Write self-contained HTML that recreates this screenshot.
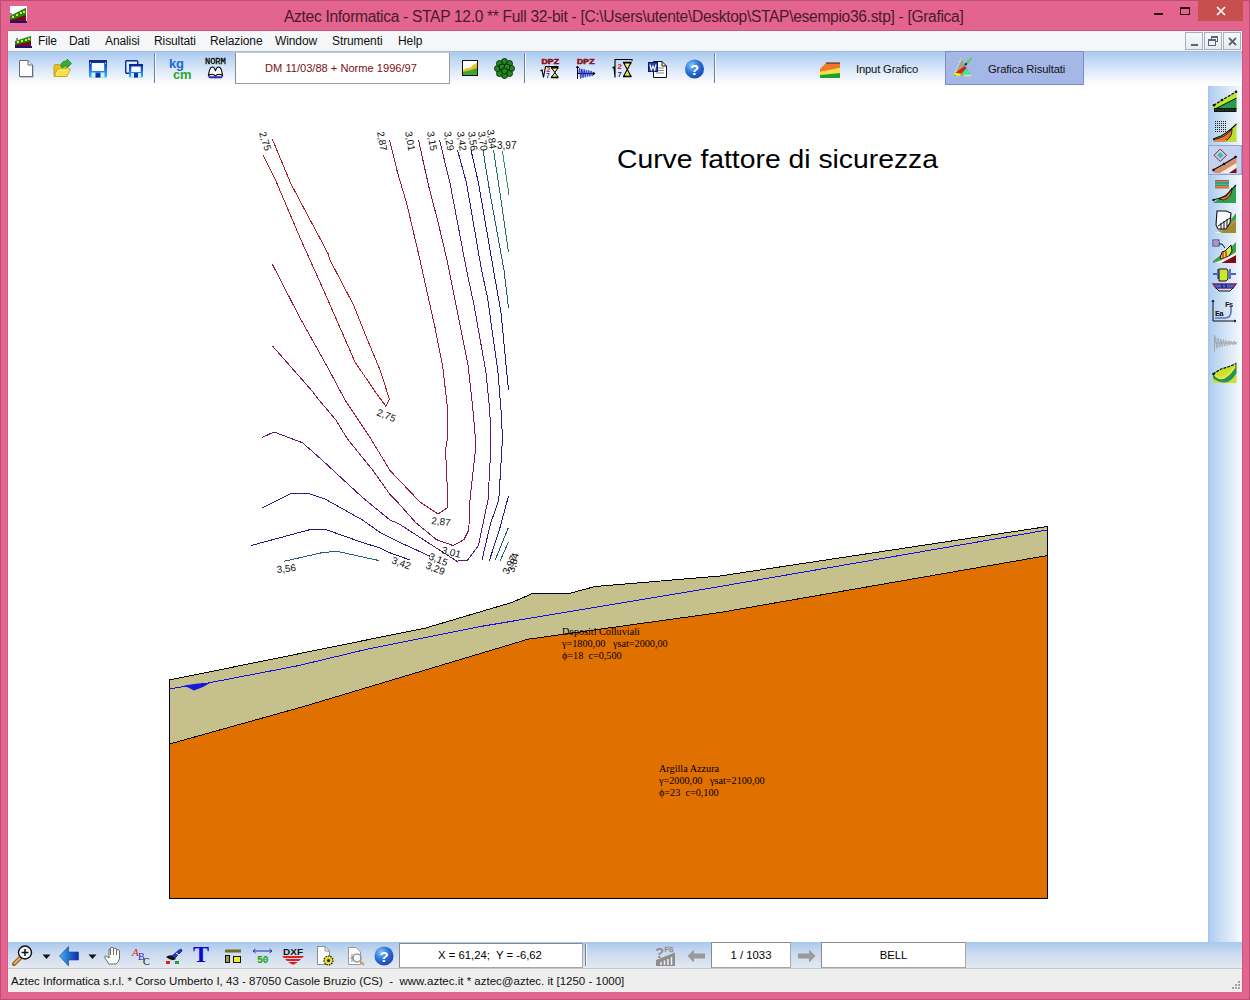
<!DOCTYPE html>
<html><head><meta charset="utf-8">
<style>
*{margin:0;padding:0;box-sizing:border-box}
html,body{width:1250px;height:1000px;overflow:hidden;background:#E3648E;font-family:"Liberation Sans",sans-serif;position:relative}
.a{position:absolute}
svg.a{overflow:visible}
#ttext{left:284px;top:8px;font-size:15.6px;color:#4A1A2C;white-space:pre;letter-spacing:-0.32px}
#menu{left:8px;top:31px;width:1234px;height:19px;background:#F5F6F7}
.mi{position:absolute;top:3px;font-size:12px;color:#111;white-space:pre;letter-spacing:-0.1px}
#tb{left:8px;top:50px;width:1234px;height:36px;background:linear-gradient(#EEF3F9 0px,#EEF3F9 1px,#A9BDD6 1px,#A9BDD6 2px,#AACAF0 2px,#C9DDF5 13px,#F4F8FD 30px,#FFFFFF 36px)}
#canvas{left:8px;top:86px;width:1200px;height:856px;background:#fff}
#side{left:1208px;top:86px;width:34px;height:856px;background:linear-gradient(90deg,#A8C0DC 0px,#AFCDF3 2px,#C2DAF3 10px,#E6EEFA 26px,#F6F9FE 33px)}
#btb{left:8px;top:942px;width:1234px;height:27px;background:linear-gradient(#A8C8EE 0px,#C8D9EF 10px,#E4E9F0 26px);border-bottom:1px solid #C5C8CC}
#status{left:8px;top:969px;width:1234px;height:23px;background:#EEEEEE}
#stext{left:11px;top:975px;font-size:11.53px;color:#111;white-space:pre}
.box{position:absolute;background:#fff;border:1px solid #A6A6A6;border-top-color:#8A8A8A;border-left-color:#8A8A8A;white-space:pre;text-align:center;color:#000}
.sep{position:absolute;width:2px;border-left:1px solid #6F7F95;border-right:1px solid #F8FBFF}
</style></head><body>

<div class="a" style="left:0;top:0;width:1250px;height:1000px;border:1px solid #B84E72"></div>
<div class="a" style="left:1242px;top:31px;width:1px;height:961px;background:#C85A80"></div>
<div class="a" style="left:7px;top:31px;width:1px;height:961px;background:#D05C84"></div>
<div id="ttext" class="a">Aztec Informatica - STAP 12.0 ** Full 32-bit - [C:\Users\utente\Desktop\STAP\esempio36.stp] - [Grafica]</div>
<svg class="a" style="left:10px;top:6px" width="17" height="17" viewBox="0 0 17 17">
<rect x="0" y="0" width="17" height="17" fill="#fff"/>
<path d="M0,10 L4,8 L8,6 L12,4 L16,2 V17 H0 Z" fill="#7A0A1A"/>
<path d="M0,10 L16,2 V9 L0,14 Z" fill="#18900E"/>
<path d="M2,10 h2 v2 h-2z M6,8 h2 v2 h-2z M10,6 h2 v2 h-2z M13,5 h2 v2 h-2z" fill="#E8E040"/>
<rect x="0" y="15" width="17" height="2" fill="#20107A"/>
<rect x="0" y="7" width="2" height="3" fill="#B070B0"/>
</svg>
<div class="a" style="left:1154px;top:13px;width:9px;height:2px;background:#2A0A14"></div>
<div class="a" style="left:1180px;top:7px;width:10px;height:8px;border:1px solid #2A0A14;border-top-width:2px"></div>
<div class="a" style="left:1198px;top:0;width:45px;height:21px;background:#C7504F"></div>
<svg class="a" style="left:1216px;top:6px" width="10" height="10" viewBox="0 0 10 10"><path d="M1,1 L9,9 M9,1 L1,9" stroke="#fff" stroke-width="1.6"/></svg>
<div class="a" style="left:8px;top:30px;width:1234px;height:1px;background:#C9587E"></div>
<div id="menu" class="a">
<svg class="a" style="left:7px;top:5px" width="17" height="12" viewBox="0 0 17 12">
<path d="M0,6 L16,1 V12 H0 Z" fill="#7A0A1A"/>
<path d="M0,5 L16,0 V5 L0,9 Z" fill="#18900E"/>
<path d="M2,5 h2 v2 h-2z M6,4 h2 v2 h-2z M10,3 h2 v2 h-2z M13,2 h2 v2 h-2z" fill="#E8E040"/>
<rect x="0" y="10" width="17" height="2" fill="#20107A"/>
<rect x="1" y="2" width="2" height="3" fill="#B070B0"/>
</svg>
<span class="mi" style="left:30px">File</span>
<span class="mi" style="left:61px">Dati</span>
<span class="mi" style="left:97px">Analisi</span>
<span class="mi" style="left:146px">Risultati</span>
<span class="mi" style="left:202px">Relazione</span>
<span class="mi" style="left:267px">Window</span>
<span class="mi" style="left:324px">Strumenti</span>
<span class="mi" style="left:390px">Help</span>
<div class="a" style="left:1177px;top:1px;width:18px;height:18px;border:1px solid #A8B0BA;background:linear-gradient(#F6F8FB,#E6ECF3)"><div class="a" style="left:5px;top:11px;width:7px;height:2px;background:#5C6470"></div></div>
<div class="a" style="left:1196px;top:1px;width:18px;height:18px;border:1px solid #A8B0BA;background:linear-gradient(#F6F8FB,#E6ECF3)"><div class="a" style="left:6px;top:3px;width:7px;height:6px;border:1px solid #5C6470;border-top-width:2px"></div><div class="a" style="left:3px;top:6px;width:8px;height:7px;border:1px solid #5C6470;border-top-width:2px;background:#EEF2F7"></div></div>
<div class="a" style="left:1215px;top:1px;width:18px;height:18px;border:1px solid #A8B0BA;background:linear-gradient(#F6F8FB,#E6ECF3)"><svg class="a" style="left:4px;top:4px" width="9" height="9" viewBox="0 0 9 9"><path d="M1,1 L8,8 M8,1 L1,8" stroke="#5C6470" stroke-width="1.8"/></svg></div>
</div>
<div id="tb" class="a"></div>
<div id="canvas" class="a"></div>
<div id="side" class="a"></div>
<div id="btb" class="a"></div>
<div id="status" class="a"></div>
<div id="stext" class="a">Aztec Informatica s.r.l. * Corso Umberto I, 43 - 87050 Casole Bruzio (CS)  -  www.aztec.it * aztec@aztec. it [1250 - 1000]</div>
<svg class="a" style="left:1231px;top:980px" width="10" height="10" viewBox="0 0 10 10" fill="#A0A0A0"><rect x="7" y="1" width="2" height="2"/><rect x="4" y="4" width="2" height="2"/><rect x="7" y="4" width="2" height="2"/><rect x="1" y="7" width="2" height="2"/><rect x="4" y="7" width="2" height="2"/><rect x="7" y="7" width="2" height="2"/></svg>

<!-- new doc -->
<svg class="a" style="left:18px;top:59px" width="18" height="20" viewBox="0 0 18 20">
<path d="M2.5,2.5 H11 L15.5,7 V18.5 H2.5 Z" fill="#9A9EA4"/>
<path d="M1.5,1.5 H10 L14.5,6 V17.5 H1.5 Z" fill="#FDFDFD" stroke="#6A6E74" stroke-width="1"/>
<path d="M10,1.5 V6 H14.5" fill="#E6E8EC" stroke="#6A6E74" stroke-width="1"/>
</svg>
<!-- open folder -->
<svg class="a" style="left:53px;top:59px" width="19" height="19" viewBox="0 0 19 19">
<path d="M1,7 Q1,5.5 2.5,5.5 L6,5.5 L7.5,7 L13,7 V17.5 H1 Z" fill="#E8C020" stroke="#B89010" stroke-width="0.8"/>
<path d="M1.5,17.5 L4.5,10 L17.5,10 L14,17.5 Z" fill="#F8E048" stroke="#C8A010" stroke-width="0.8"/>
<path d="M3,16 L5.5,11 L15,11" fill="none" stroke="#FFF4A0" stroke-width="1"/>
<path d="M7.5,6.5 Q9,1.5 14,2 L14,0 L18.5,4.5 L14,9 L14,6.5 Q11,6 9.5,9 Z" fill="#30B030" stroke="#108010" stroke-width="0.7"/>
</svg>
<!-- save -->
<svg class="a" style="left:89px;top:60px" width="18" height="18" viewBox="0 0 18 18">
<defs><linearGradient id="fl" x1="0" y1="0" x2="0" y2="1"><stop offset="0" stop-color="#0A2A98"/><stop offset="0.5" stop-color="#1A6AE0"/><stop offset="1" stop-color="#40B8F8"/></linearGradient>
<linearGradient id="fl2" x1="0" y1="0" x2="0" y2="1"><stop offset="0" stop-color="#0A40B8"/><stop offset="1" stop-color="#0A2A80"/></linearGradient></defs>
<rect x="0" y="0" width="18" height="17.5" rx="1" fill="url(#fl)"/>
<rect x="0" y="0" width="18" height="2.5" fill="#0A2A90"/>
<rect x="2.8" y="3" width="12.4" height="8" fill="#F4FAFF"/>
<rect x="2.5" y="12.5" width="13" height="5" fill="#C8F0FF"/>
<rect x="6.5" y="12.5" width="5" height="5" fill="url(#fl2)"/>
<rect x="1" y="2.5" width="1" height="1" fill="#fff"/><rect x="16" y="2.5" width="1" height="1" fill="#fff"/>
</svg>
<!-- save as -->
<svg class="a" style="left:125px;top:60px" width="19" height="18" viewBox="0 0 19 18">
<rect x="0.7" y="0.7" width="12" height="12.5" rx="1" fill="#DDF0FF" stroke="#0A2A98" stroke-width="1.4"/>
<rect x="4" y="4" width="14" height="13.5" rx="1" fill="url(#fl)"/>
<rect x="4" y="4" width="14" height="2" fill="#0A2A90"/>
<rect x="6.3" y="6.5" width="9.4" height="5.5" fill="#F4FAFF"/>
<rect x="6" y="13" width="10" height="4.5" fill="#C8F0FF"/>
<rect x="9" y="13" width="4" height="4.5" fill="url(#fl2)"/>
</svg>
<div class="sep" style="left:154px;top:53px;height:30px"></div>
<!-- kg cm -->
<div class="a" style="left:169px;top:57px;font-size:13px;font-weight:bold;color:#2068D0;letter-spacing:-0.2px;line-height:14px">kg</div>
<div class="a" style="left:173px;top:68px;font-size:13px;font-weight:bold;color:#28A828;letter-spacing:-0.3px;line-height:13px">cm</div>
<!-- NORM -->
<div class="a" style="left:205px;top:58px;font-family:'Liberation Mono',monospace;font-size:8.8px;color:#000;letter-spacing:-0.1px;line-height:9px;-webkit-text-stroke:0.3px #000">NORM</div>
<svg class="a" style="left:207px;top:66px" width="17" height="12" viewBox="0 0 17 12">
<path d="M8.5,10 C7,8 4,8 1.5,9.5 C2,5 3,1.5 5,1 C7,0.8 8,3 8.5,5 C9,3 10,0.8 12,1 C14,1.5 15,5 15.5,9.5 C13,8 10,8 8.5,10 Z" fill="#fff" stroke="#000" stroke-width="1.1"/>
<path d="M1.5,10.8 H15.5 L14.5,11.8 H2.5 Z" fill="#1818A8" stroke="#1818A8" stroke-width="0.8"/>
</svg>
<!-- DM box -->
<div class="box" style="left:235px;top:52px;width:215px;height:32px;font-size:11.1px;line-height:30px;color:#781018;border-color:#C8C8C8 #9A9A9A #9A9A9A #8A8A8A;padding-right:3px">DM 11/03/88 + Norme 1996/97</div>
<!-- image icon -->
<svg class="a" style="left:462px;top:60px" width="16" height="16" viewBox="0 0 16 16">
<rect x="0.5" y="0.5" width="15" height="15" fill="#fff" stroke="#111" stroke-width="1"/>
<path d="M1,10 L5,8 L8,8 L11,5 L15,3 V15 H1 Z" fill="#F0C020"/>
<path d="M1,12 L5,11 L9,10 L15,8 V15 H1 Z" fill="#38A838"/>
<rect x="0.5" y="0.5" width="15" height="15" fill="none" stroke="#111" stroke-width="1"/>
</svg>
<!-- green cluster -->
<svg class="a" style="left:494px;top:58px" width="21" height="21" viewBox="0 0 21 21">
<g fill="#1E8A1E" stroke="#0A200A" stroke-width="0.9">
<circle cx="10.5" cy="3.5" r="3"/><circle cx="15.5" cy="5.5" r="3"/><circle cx="17.5" cy="10.5" r="3"/><circle cx="15.5" cy="15.5" r="3"/><circle cx="10.5" cy="17.5" r="3"/><circle cx="5.5" cy="15.5" r="3"/><circle cx="3.5" cy="10.5" r="3"/><circle cx="5.5" cy="5.5" r="3"/><circle cx="8" cy="9" r="3"/><circle cx="13" cy="9" r="3"/><circle cx="10.5" cy="13" r="3"/>
</g>
</svg>
<div class="sep" style="left:524px;top:53px;height:30px"></div>
<!-- DPZ 1 -->
<svg class="a" style="left:540px;top:58px" width="21" height="21" viewBox="0 0 21 21">
<text x="1.5" y="5.8" font-family="Liberation Sans" font-weight="bold" font-size="6.5" fill="#8A1020" stroke="#8A1020" stroke-width="0.5" textLength="17.5" lengthAdjust="spacingAndGlyphs">DPZ</text>
<path d="M0.5,13 L2,12 L3.5,19.5 L5.5,8.5 H18.5" fill="none" stroke="#000" stroke-width="1.1"/>
<text x="6.5" y="14" font-family="Liberation Sans" font-weight="bold" font-size="7" fill="#D01818">2</text>
<text x="6" y="20" font-family="Liberation Sans" font-weight="bold" font-size="6.5" fill="#1818C0">7</text>
<path d="M11,9.5 H18.5 M11,19.5 H18.5" stroke="#000" stroke-width="1.4"/>
<path d="M11.5,10 L15,14.5 L11.5,19 H18 L14.8,14.5 L18,10 Z" fill="#F0F080" stroke="#000" stroke-width="1"/>
<path d="M13,18.5 L14.8,16 L16.5,18.5 Z" fill="#E0E020"/>
</svg>
<!-- DPZ 2 -->
<svg class="a" style="left:576px;top:58px" width="21" height="21" viewBox="0 0 21 21">
<text x="1" y="5.8" font-family="Liberation Sans" font-weight="bold" font-size="6.5" fill="#8A1020" stroke="#8A1020" stroke-width="0.5" textLength="17.5" lengthAdjust="spacingAndGlyphs">DPZ</text>
<path d="M1.5,8 V21 M0.3,10 L1.5,8 L2.7,10 M1.5,15.5 H18.5" fill="none" stroke="#000" stroke-width="1"/>
<path d="M17,13.5 L19.5,15.5 L17,17.5 Z" fill="#000"/>
<polyline points="3.00,15.50 3.10,14.03 3.20,12.68 3.30,11.56 3.40,10.74 3.50,10.28 3.60,10.21 3.70,10.54 3.80,11.23 3.90,12.22 4.00,13.44 4.10,14.80 4.20,16.19 4.30,17.52 4.40,18.68 4.50,19.59 4.60,20.19 4.70,20.43 4.80,20.31 4.90,19.84 5.00,19.05 5.10,18.01 5.20,16.79 5.30,15.50 5.40,14.22 5.50,13.06 5.60,12.08 5.70,11.37 5.80,10.98 5.90,10.92 6.00,11.20 6.10,11.80 6.20,12.66 6.30,13.72 6.40,14.89 6.50,16.10 6.60,17.25 6.70,18.25 6.80,19.04 6.90,19.56 7.00,19.77 7.10,19.67 7.20,19.26 7.30,18.57 7.40,17.67 7.50,16.62 7.60,15.50 7.70,14.39 7.80,13.38 7.90,12.54 8.00,11.93 8.10,11.58 8.20,11.54 8.30,11.78 8.40,12.29 8.50,13.04 8.60,13.96 8.70,14.98 8.80,16.02 8.90,17.02 9.00,17.89 9.10,18.57 9.20,19.02 9.30,19.20 9.40,19.11 9.50,18.75 9.60,18.16 9.70,17.38 9.80,16.47 9.90,15.50 10.00,14.54 10.10,13.67 10.20,12.94 10.30,12.41 10.40,12.11 10.50,12.07 10.60,12.28 10.70,12.72 10.80,13.37 10.90,14.16 11.00,15.05 11.10,15.95 11.20,16.81 11.30,17.57 11.40,18.16 11.50,18.55 11.60,18.71 11.70,18.63 11.80,18.32 11.90,17.80 12.00,17.13 12.10,16.34 12.20,15.50 12.30,14.67 12.40,13.91 12.50,13.28 12.60,12.82 12.70,12.56 12.80,12.53 12.90,12.71 13.00,13.09 13.10,13.65 13.20,14.34 13.30,15.11 13.40,15.89 13.50,16.64 13.60,17.29 13.70,17.80 13.80,18.14 13.90,18.28 14.00,18.21 14.10,17.94 14.20,17.50 14.30,16.91 14.40,16.23 14.50,15.50 14.60,14.78 14.70,14.12 14.80,13.58 14.90,13.18 15.00,12.96 15.10,12.92 15.20,13.08 15.30,13.42 15.40,13.90 15.50,14.50 15.60,15.16 15.70,15.84 15.80,16.48 15.90,17.05 16.00,17.49 16.10,17.79 16.20,17.90 16.30,17.85 16.40,17.61 16.50,17.23 16.60,16.72 16.70,16.13 16.80,15.50 16.90,14.88 17.00,14.31" fill="none" stroke="#1A2AC8" stroke-width="1"/>
</svg>
<!-- sqrt hourglass -->
<svg class="a" style="left:612px;top:58px" width="21" height="21" viewBox="0 0 21 21">
<path d="M0.5,10 L2,9 L3,19.5 L3,1.5 H20 V3" fill="none" stroke="#000" stroke-width="1.1"/>
<text x="5.5" y="11" font-family="Liberation Sans" font-weight="bold" font-size="8" fill="#D01818">2</text>
<text x="5.5" y="19" font-family="Liberation Sans" font-weight="bold" font-size="7.5" fill="#1818C0">7</text>
<path d="M11,4.5 H19.5 M11,18.5 H19.5" stroke="#000" stroke-width="1.5"/>
<path d="M11.8,5 L15.2,11.5 L11.8,18 H18.8 L15.3,11.5 L18.8,5 Z" fill="#F0F080" stroke="#000" stroke-width="1.1"/>
<path d="M13,17.5 L15.2,14 L17.5,17.5 Z" fill="#E0E020"/>
</svg>
<!-- word -->
<svg class="a" style="left:648px;top:59px" width="20" height="19" viewBox="0 0 20 19">
<path d="M5.5,2.5 H14 L18.5,7 V18.5 H5.5 Z" fill="#fff" stroke="#111" stroke-width="1"/>
<path d="M14,2.5 V7 H18.5" fill="none" stroke="#111" stroke-width="1"/>
<path d="M8,9 H16 M8,11.5 H16 M8,14 H16" stroke="#777" stroke-width="0.9"/>
<rect x="0.5" y="3.5" width="9" height="9" fill="#2040B0" stroke="#0A1A70" stroke-width="1"/>
<path d="M2,5.5 L3.3,11 L5,7 L6.7,11 L8,5.5" fill="none" stroke="#fff" stroke-width="1.1"/>
</svg>
<!-- help -->
<svg class="a" style="left:684px;top:59px" width="21" height="20" viewBox="0 0 21 20">
<defs><radialGradient id="hg" cx="0.35" cy="0.3" r="0.8"><stop offset="0" stop-color="#7FC8F8"/><stop offset="0.5" stop-color="#2A70D8"/><stop offset="1" stop-color="#1A40B0"/></radialGradient></defs>
<circle cx="10.5" cy="10" r="9.5" fill="url(#hg)"/>
<text x="10.5" y="16" font-family="Liberation Sans" font-weight="bold" font-size="15" fill="#fff" text-anchor="middle">?</text>
</svg>
<div class="sep" style="left:714px;top:53px;height:30px"></div>
<!-- Input Grafico -->
<svg class="a" style="left:820px;top:61px" width="21" height="18" viewBox="0 0 21 18">
<path d="M0,8 L6,2 H20 V7 L0,11 Z" fill="#F07828"/>
<path d="M6,2 H20" stroke="#222" stroke-width="1"/>
<path d="M0,11 L20,7 V12 L0,14 Z" fill="#F4E040"/>
<path d="M0,14 L20,12 V17 H0 Z" fill="#20A020"/>
<rect x="0" y="9" width="20" height="1" fill="#F8F060" opacity="0"/>
</svg>
<div class="a" style="left:856px;top:63px;font-size:11.2px;color:#111;white-space:pre;letter-spacing:-0.15px">Input Grafico</div>
<div class="a" style="left:945px;top:51px;width:139px;height:34px;background:#A5B7E7;border:1px solid #7A8FC6"></div>
<svg class="a" style="left:952px;top:57px" width="21" height="21" viewBox="0 0 21 21">
<path d="M9.3,1.4 L2,18.7 L19,18.4 Z" fill="#98A888"/>
<path d="M9.3,1.4 L2,18.7" stroke="#F8F4B0" stroke-width="1.4" stroke-dasharray="1,1"/>
<path d="M13,10 L16,14 L18,18 L11,18 Z" fill="#20F0B0"/>
<path d="M4,15.5 L12.5,9 L14.5,11 L8,18 Z" fill="#E81A00"/>
<path d="M2.5,16 L9,16.5 L8,19 L2,19 Z" fill="#F0F020"/>
<path d="M2,17.5 L5,19 L2,19 Z" fill="#20D020"/>
<path d="M12,18.5 H19" stroke="#E8F060" stroke-width="1.5"/>
<path d="M13,8 L15,6" stroke="#0A2A50" stroke-width="2"/>
<path d="M15.5,5.5 L19,1.5" stroke="#60D060" stroke-width="2.5" stroke-linecap="round"/>
</svg>
<div class="a" style="left:988px;top:63px;font-size:11.2px;color:#111;white-space:pre;letter-spacing:-0.1px">Grafica Risultati</div>

<!-- sidebar icons -->
<div class="a" style="left:1208px;top:145px;width:34px;height:30px;background:#C4D2EE;border:1px solid #8CA4D8"></div>
<svg class="a" style="left:1212px;top:89px" width="26" height="296" viewBox="0 0 26 296">
<!-- 1 -->
<g transform="translate(0,0)">
<path d="M1.5,16.5 L10,11 L17,7 L24.5,2.5 V20 H1.5 Z" fill="#B8E830"/>
<path d="M3,20 L24.5,9 V20 Z" fill="#2A9A50"/>
<path d="M3,20 L24.5,9" stroke="#111" stroke-width="1"/>
<path d="M1.5,16.5 L10,11 L17,7 L24.5,2.5" fill="none" stroke="#111" stroke-width="1.3" stroke-dasharray="3,1.2"/>
<circle cx="2" cy="16.3" r="1.3" fill="#111"/><circle cx="10" cy="11" r="1.3" fill="#111"/><circle cx="24" cy="2.8" r="1.3" fill="#111"/>
<rect x="2" y="19" width="22.5" height="4" fill="#111"/>
<path d="M3,21 H24" stroke="#3A7A40" stroke-width="1" stroke-dasharray="1.5,1"/>
</g>
<!-- 2 -->
<g transform="translate(0,30)" >
<g fill="#222">
<rect x="3" y="2" width="1" height="1"/><rect x="5" y="2" width="1" height="1"/><rect x="7" y="2" width="1" height="1"/><rect x="9" y="2" width="1" height="1"/><rect x="11" y="2" width="1" height="1"/><rect x="13" y="2" width="1" height="1"/>
<rect x="3" y="4" width="1" height="1"/><rect x="5" y="4" width="1" height="1"/><rect x="7" y="4" width="1" height="1"/><rect x="9" y="4" width="1" height="1"/><rect x="11" y="4" width="1" height="1"/><rect x="13" y="4" width="1" height="1"/>
<rect x="3" y="6" width="1" height="1"/><rect x="5" y="6" width="1" height="1"/><rect x="7" y="6" width="1" height="1"/><rect x="9" y="6" width="1" height="1"/><rect x="11" y="6" width="1" height="1"/><rect x="13" y="6" width="1" height="1"/>
<rect x="3" y="8" width="1" height="1"/><rect x="5" y="8" width="1" height="1"/><rect x="7" y="8" width="1" height="1"/><rect x="9" y="8" width="1" height="1"/><rect x="11" y="8" width="1" height="1"/><rect x="13" y="8" width="1" height="1"/>
<rect x="3" y="10" width="1" height="1"/><rect x="5" y="10" width="1" height="1"/><rect x="7" y="10" width="1" height="1"/><rect x="9" y="10" width="1" height="1"/><rect x="11" y="10" width="1" height="1"/><rect x="13" y="10" width="1" height="1"/>
<rect x="3" y="12" width="1" height="1"/><rect x="5" y="12" width="1" height="1"/><rect x="7" y="12" width="1" height="1"/><rect x="9" y="12" width="1" height="1"/><rect x="11" y="12" width="1" height="1"/><rect x="13" y="12" width="1" height="1"/>
</g>
<path d="M1,20 L9,17 L14,14 L19,10 L24.5,5 V23 H1 Z" fill="#B8E030"/>
<path d="M1,21 Q8,19 12,17 Q17,14 20,10 Q20,18 15,21 Q10,23 5,22 Z" fill="#F07020" stroke="#111" stroke-width="0.9"/>
<path d="M1,21 H15 L13,23 H2 Z" fill="#D09060"/>
<path d="M1,20 L9,17 L14,14 L19,10 L24.5,5" fill="none" stroke="#111" stroke-width="1.2"/>
</g>
<!-- 3 -->
<g transform="translate(0,60)">
<path d="M2,6.25 L8.25,0 L14.5,6.25 L8.25,12.5 Z" fill="none" stroke="#802040" stroke-width="1"/>
<path d="M5,6.25 L8.25,3 L11.5,6.25 L8.25,9.5 Z" fill="#40C0A0"/>
<path d="M1,21 L12,15 L24.5,7.5 V24 H2 Z" fill="#D8906A"/>
<path d="M8,24 L24.5,14 V24 Z" fill="#F8F0E8"/>
<path d="M17,24 L24.5,19 V24 Z" fill="#800818"/>
<path d="M1,21 L12,15 L24.5,7.5" fill="none" stroke="#111" stroke-width="1.3"/>
<circle cx="1.5" cy="21" r="1.3" fill="#111"/><circle cx="12" cy="15" r="1.3" fill="#111"/><circle cx="23.5" cy="8" r="1.3" fill="#111"/>
</g>
<!-- 4 -->
<g transform="translate(0,90)">
<rect x="3" y="1" width="14" height="1.5" fill="#E04040"/><rect x="3" y="2.5" width="14" height="3" fill="#30A090"/><rect x="3" y="5.5" width="14" height="2" fill="#40A040"/><rect x="3" y="7.5" width="14" height="2" fill="#F06030"/>
<path d="M1,24 L8,19 L14,17 L19,11 L24,6 V24 Z" fill="#30A050"/>
<path d="M7,20 Q13,17 15,15 Q18,12 20,9 Q20,18 12,21 Z" fill="#F07830" stroke="#111" stroke-width="0.8"/>
<path d="M1,21 L8,19 L14,17 L19,11 L24,6" fill="none" stroke="#111" stroke-width="1.1"/>
<circle cx="1.5" cy="21" r="1.2" fill="#111"/>
</g>
<!-- 5 -->
<g transform="translate(0,120)">
<path d="M1,24 L8,21 L16,14 L24,4 V24 Z" fill="#40A040"/>
<path d="M10,24 L24,12 V24 Z" fill="#A08A30"/>
<path d="M6,22 L24,10 V13 L10,24 Z" fill="#D09060" opacity="0.7"/>
<path d="M5,2 H14 L19,4 L18,14 L14,20 L6,20 L4,16 Z" fill="#F8FAFF" stroke="#111" stroke-width="1.1"/>
<path d="M6,17 L18,9 M9,20 V14 M12,20 V12 M15,18 V10" stroke="#111" stroke-width="1"/>
<path d="M1,24 H10 L6,22 Z" fill="#F0F0E0"/>
</g>
<!-- 6 -->
<g transform="translate(0,150)">
<rect x="1" y="1" width="6" height="6" fill="#F0F4FC" stroke="#2030A0" stroke-width="1"/><path d="M2,3 H6 M2,5 H6" stroke="#A02060" stroke-width="1"/>
<path d="M7,5 H10 L13,9" fill="none" stroke="#111" stroke-width="1"/>
<path d="M1,22 L10,15 L17,10 L24,3 V13 L14,20 L1,24 Z" fill="#40A050"/>
<path d="M8,19 L10,13 L13,12 L16,9 L19,6 L20,12 L17,17 L10,20 Z" fill="#C8F040" stroke="#111" stroke-width="1"/>
<path d="M11,13 V20 M14,12 V19" stroke="#E02020" stroke-width="1.4"/>
<path d="M9,24 L24,16 V24 Z" fill="#800818"/>
<path d="M3,24 L24,14 V16 L9,24 Z" fill="#F4F0E8"/>
</g>
<!-- 7 -->
<g transform="translate(0,180)">
<path d="M1,5 H5 M19,5 H24 M6,0 V10 M18,0 V10" stroke="#2030B0" stroke-width="1.3" fill="none"/>
<path d="M7,0 H15 L16,2 V10 L14,12 H7 Z" fill="#C8E830" stroke="#111" stroke-width="1"/>
<path d="M1,15 H24 L21,19 H4 Z" fill="#3070D0" stroke="#802060" stroke-width="1.3"/>
<rect x="9" y="15" width="2" height="4" fill="#1A30A0"/><rect x="13" y="15" width="2" height="4" fill="#1A30A0"/>
<path d="M4,19 L7,22 H18 L21,19" fill="none" stroke="#111" stroke-width="1"/>
</g>
<!-- 8 -->
<g transform="translate(0,210)">
<path d="M1,1 V22 H24 M0,3 L1,1 L2,3 M22,21 L24,22 L22,23" fill="none" stroke="#111" stroke-width="1"/>
<text x="3" y="17" font-family="Liberation Mono" font-size="8" font-weight="bold" fill="#111" letter-spacing="-0.8">Ea</text>
<text x="13" y="8" font-family="Liberation Mono" font-size="7.5" font-weight="bold" fill="#111" letter-spacing="-0.8">Fs</text>
<path d="M3,19 H13 Q19,19 19,12 V8" fill="none" stroke="#6070B8" stroke-width="1.6"/>
</g>
<!-- 9 -->
<g transform="translate(0,243)">
<path d="M2.5,3 V19.5" stroke="#A8A8A8" stroke-width="1.2"/>
<path d="M2.5,11 H24.5 M22.5,9.5 L24.5,11 L22.5,12.5" fill="none" stroke="#B0B0B0" stroke-width="0.9"/>
<polyline points="3.00,11.00 3.10,9.57 3.20,8.25 3.30,7.11 3.40,6.20 3.50,5.59 3.60,5.29 3.70,5.33 3.80,5.70 3.90,6.37 4.00,7.30 4.10,8.42 4.20,9.68 4.30,11.00 4.40,12.30 4.50,13.51 4.60,14.55 4.70,15.37 4.80,15.93 4.90,16.20 5.00,16.16 5.10,15.83 5.20,15.22 5.30,14.38 5.40,13.35 5.50,12.20 5.60,11.00 5.70,9.82 5.80,8.72 5.90,7.77 6.00,7.01 6.10,6.50 6.20,6.26 6.30,6.29 6.40,6.60 6.50,7.15 6.60,7.92 6.70,8.86 6.80,9.91 6.90,11.00 7.00,12.08 7.10,13.08 7.20,13.95 7.30,14.63 7.40,15.10 7.50,15.32 7.60,15.29 7.70,15.01 7.80,14.50 7.90,13.80 8.00,12.95 8.10,12.00 8.20,11.00 8.30,10.02 8.40,9.10 8.50,8.31 8.60,7.69 8.70,7.27 8.80,7.06 8.90,7.09 9.00,7.35 9.10,7.81 9.20,8.44 9.30,9.22 9.40,10.09 9.50,11.00 9.60,11.90 9.70,12.73 9.80,13.45 9.90,14.02 10.00,14.40 10.10,14.59 10.20,14.56 10.30,14.33 10.40,13.91 10.50,13.33 10.60,12.62 10.70,11.83 10.80,11.00 10.90,10.18 11.00,9.43 11.10,8.77 11.20,8.25 11.30,7.90 11.40,7.73 11.50,7.75 11.60,7.96 11.70,8.35 11.80,8.88 11.90,9.52 12.00,10.25 12.10,11.00 12.20,11.74 12.30,12.43 12.40,13.03 12.50,13.51 12.60,13.83 12.70,13.98 12.80,13.96 12.90,13.77 13.00,13.42 13.10,12.93 13.20,12.35 13.30,11.69 13.40,11.00 13.50,10.32 13.60,9.69 13.70,9.15 13.80,8.72 13.90,8.42 14.00,8.29 14.10,8.30 14.20,8.48 14.30,8.80 14.40,9.24 14.50,9.77 14.60,10.37 14.70,11.00 14.80,11.62 14.90,12.19 15.00,12.69 15.10,13.08 15.20,13.35 15.30,13.47 15.40,13.46 15.50,13.30 15.60,13.01 15.70,12.61 15.80,12.12 15.90,11.57 16.00,11.00 16.10,10.44 16.20,9.91 16.30,9.46 16.40,9.10 16.50,8.86 16.60,8.75 16.70,8.76 16.80,8.91 16.90,9.17 17.00,9.54 17.10,9.98 17.20,10.48 17.30,11.00 17.40,11.51 17.50,11.99 17.60,12.40 17.70,12.73 17.80,12.95 17.90,13.05 18.00,13.04 18.10,12.91 18.20,12.67 18.30,12.33 18.40,11.93 18.50,11.47 18.60,11.00 18.70,10.53 18.80,10.10 18.90,9.72 19.00,9.43 19.10,9.22 19.20,9.13 19.30,9.14 19.40,9.26 19.50,9.48 19.60,9.78 19.70,10.15 19.80,10.57 19.90,11.00 20.00,11.43 20.10,11.82 20.20,12.16 20.30,12.44 20.40,12.62 20.50,12.71 20.60,12.69 20.70,12.58 20.80,12.38 20.90,12.11 21.00,11.77 21.10,11.39 21.20,11.00 21.30,10.61 21.40,10.25 21.50,9.94 21.60,9.69 21.70,9.52 21.80,9.44 21.90,9.46 22.00,9.56 22.10,9.74 22.20,9.99 22.30,10.30 22.40,10.64 22.50,11.00 22.60,11.35 22.70,11.68 22.80,11.97 22.90,12.19 23.00,12.34 23.10,12.42 23.20,12.41 23.30,12.32 23.40,12.15 23.50,11.92 23.60,11.64 23.70,11.33 23.80,11.00 23.90,10.68 24.00,10.38" fill="none" stroke="#A0A0A0" stroke-width="0.9"/>
</g>
<!-- 10 -->
<g transform="translate(0,272)">
<path d="M1,13 L9,8 L16,6 L24.5,2.5 V22 H1 Z" fill="#C8E030"/>
<path d="M1,13 Q10,26 24.5,3 V12 Q19,22 11,21.5 Q4,20 1,17 Z" fill="#28905A"/>
<path d="M3.5,13.5 Q11,21 22.5,5 L23.5,6.5 Q12,24 3.5,15.5 Z" fill="#E8E840"/>
<path d="M1,13 L9,8 L16,6 L24.5,2.5" fill="none" stroke="#111" stroke-width="1.3" stroke-dasharray="3,1"/>
<circle cx="1.5" cy="13" r="1.3" fill="#111"/>
</g>
</svg>

<!-- bottom toolbar -->
<svg class="a" style="left:12px;top:945px" width="22" height="21" viewBox="0 0 22 21">
<path d="M2,19 L8,13" stroke="#8A5A20" stroke-width="4" stroke-linecap="round"/>
<path d="M2.5,18.5 L8,13" stroke="#E8B060" stroke-width="2" stroke-linecap="round"/>
<circle cx="13" cy="7.5" r="6.5" fill="#F4FAFC" stroke="#111" stroke-width="1.4"/>
<path d="M9.5,7.5 H16.5 M13,4 V11" stroke="#111" stroke-width="1.5"/>
</svg>
<svg class="a" style="left:42px;top:954px" width="9" height="6" viewBox="0 0 9 6"><path d="M0.5,0.5 H8.5 L4.5,5 Z" fill="#111"/></svg>
<svg class="a" style="left:59px;top:946px" width="21" height="21" viewBox="0 0 21 21">
<defs><linearGradient id="ba" x1="0" y1="0" x2="1" y2="0"><stop offset="0" stop-color="#40B0F0"/><stop offset="1" stop-color="#0A2AB0"/></linearGradient></defs>
<path d="M0.5,10 L9.5,0.5 V6 H19.5 V14 H9.5 V20 Z" fill="url(#ba)" stroke="#1A4A90" stroke-width="0.6"/>
</svg>
<svg class="a" style="left:88px;top:954px" width="9" height="6" viewBox="0 0 9 6"><path d="M0.5,0.5 H8.5 L4.5,5 Z" fill="#111"/></svg>
<svg class="a" style="left:103px;top:946px" width="20" height="19" viewBox="0 0 20 19">
<path d="M6,18 L2,12 Q1,10 3,10 L6,12 V4 Q6,2.5 7.5,3 V9 V2 Q9,0.5 10.5,2 V9 V2.5 Q12,1.5 13.5,3 V9 V4 Q15,3 16.5,4.5 V12 Q16,16 13,18 Z" fill="#fff" stroke="#6A6A6A" stroke-width="1"/>
</svg>
<svg class="a" style="left:132px;top:946px" width="20" height="20" viewBox="0 0 20 20">
<text x="0" y="10" font-family="Liberation Serif" font-style="italic" font-size="11" fill="#E02020">A</text>
<text x="6" y="14" font-family="Liberation Serif" font-size="10" fill="#1A1ACA">B</text>
<text x="11" y="19" font-family="Liberation Serif" font-size="10" fill="#111">C</text>
</svg>
<svg class="a" style="left:164px;top:947px" width="19" height="18" viewBox="0 0 19 18">
<path d="M2,10 Q6,7 9,9 L12,12 Q8,15 2,10 Z" fill="#111"/>
<path d="M8,9 L15,3 Q18,1 18,4 L11,11 Z" fill="#2040C0" stroke="#0A1A80" stroke-width="0.8"/>
<path d="M12,6 L15,8" stroke="#fff" stroke-width="1"/>
<rect x="2" y="14" width="4" height="3" fill="#E02020"/><rect x="11" y="14" width="4" height="3" fill="#20A040"/>
</svg>
<div class="a" style="left:193px;top:941px;font-family:'Liberation Serif';font-weight:bold;font-size:24px;color:#0A0AD0;line-height:26px">T</div>
<svg class="a" style="left:225px;top:949px" width="17" height="15" viewBox="0 0 17 15">
<rect x="0" y="0.5" width="16" height="3" fill="#706A30"/>
<rect x="0.5" y="6.5" width="4" height="7" fill="#A09850" stroke="#111" stroke-width="1"/>
<rect x="8.5" y="7.5" width="7" height="6" fill="#F0F020" stroke="#111" stroke-width="1"/>
</svg>
<svg class="a" style="left:252px;top:948px" width="21" height="16" viewBox="0 0 21 16">
<path d="M1,3 H20 M1,3 L3.5,1 M1,3 L3.5,5 M20,3 L17.5,1 M20,3 L17.5,5" fill="none" stroke="#1A30B0" stroke-width="1"/>
<text x="10.5" y="15" font-family="Liberation Mono" font-weight="bold" font-size="10" fill="#20A020" text-anchor="middle" letter-spacing="-0.5">50</text>
</svg>
<svg class="a" style="left:282px;top:947px" width="22" height="18" viewBox="0 0 22 18">
<text x="1" y="7.5" font-family="Liberation Sans" font-weight="bold" font-size="8.5" fill="#111" textLength="20" lengthAdjust="spacingAndGlyphs">DXF</text>
<path d="M0,9 H22 L20,11 H2 Z M3,12 H19 L17,14 H5 Z M6,15 H16 L12,17.5 H10 Z" fill="#E02020"/>
</svg>
<svg class="a" style="left:316px;top:945px" width="19" height="21" viewBox="0 0 19 21">
<path d="M1.5,1.5 H9 L13.5,6 V19.5 H1.5 Z" fill="#fff" stroke="#8A8A8A" stroke-width="1"/>
<path d="M9,1.5 V6 H13.5" fill="none" stroke="#8A8A8A" stroke-width="1"/>
<circle cx="12.5" cy="15.5" r="4.5" fill="#E8E020" stroke="#111" stroke-width="1.2" stroke-dasharray="1.5,1"/>
<circle cx="12.5" cy="15.5" r="1.5" fill="#111"/>
</svg>
<svg class="a" style="left:347px;top:946px" width="19" height="20" viewBox="0 0 19 20">
<path d="M1.5,1.5 H9 L13.5,6 V18.5 H1.5 Z" fill="#fff" stroke="#9A9A9A" stroke-width="1"/>
<path d="M5,16 V8 M3,12 H8" stroke="#B0B0B0" stroke-width="1.5"/>
<circle cx="10" cy="12" r="4" fill="#F8F8F8" stroke="#7A7A7A" stroke-width="1.2"/>
<path d="M13,15 L17,19" stroke="#C8A060" stroke-width="2.2"/>
</svg>
<svg class="a" style="left:374px;top:946px" width="20" height="20" viewBox="0 0 20 20">
<circle cx="10" cy="10" r="9.5" fill="url(#hg)"/>
<text x="10" y="16" font-family="Liberation Sans" font-weight="bold" font-size="15" fill="#fff" text-anchor="middle">?</text>
</svg>
<div class="box" style="left:399px;top:943px;width:184px;height:25px;font-size:11.3px;line-height:23px;padding-right:2px">X = 61,24;  Y = -6,62</div>
<div class="sep" style="left:585px;top:944px;height:22px"></div>
<svg class="a" style="left:655px;top:945px" width="23" height="22" viewBox="0 0 23 22">
<text x="0" y="13" font-family="Liberation Sans" font-weight="bold" font-size="15" fill="#8E8E8E">?</text>
<text x="9.5" y="7" font-family="Liberation Sans" font-size="7" fill="none" stroke="#8E8E8E" stroke-width="0.6" textLength="9" lengthAdjust="spacingAndGlyphs">FS</text>
<path d="M1,15 L20,7.5 V21 H1 Z" fill="#8E8E8E"/>
<path d="M6,20 V17 M9.5,20 V15.5 M13,20 V14 M16.5,20 V12" stroke="#F0F0F0" stroke-width="1.5"/>
</svg>
<svg class="a" style="left:687px;top:949px" width="19" height="14" viewBox="0 0 19 14"><path d="M0.5,7 L7,0.5 V4.5 H18 V9.5 H7 V13.5 Z" fill="#9A9A9A"/></svg>
<div class="box" style="left:711px;top:942px;width:80px;height:26px;font-size:11.3px;line-height:24px">1 / 1033</div>
<svg class="a" style="left:797px;top:949px" width="19" height="14" viewBox="0 0 19 14"><path d="M18.5,7 L12,0.5 V4.5 H1 V9.5 H12 V13.5 Z" fill="#9A9A9A"/></svg>
<div class="box" style="left:821px;top:942px;width:145px;height:26px;font-size:11.3px;line-height:24px">BELL</div>

<svg class="a" style="left:0;top:0" width="1250" height="1000" viewBox="0 0 1250 1000">
<g stroke="#000" stroke-width="1" shape-rendering="crispEdges">
<polygon fill="#C5C08C" points="169.5,680 425.6,628 512,602.4 532.8,593.4 570.2,593.2 595.2,586.5 720,576 1047.5,526.5 1047.5,898.5 169.5,898.5"/>
<polygon fill="#E07000" points="169.5,744 304,706.4 528,639.2 720,612.5 1047.5,555.5 1047.5,898.5 169.5,898.5"/>
</g>
<polyline fill="none" stroke="#1010E0" stroke-width="1" shape-rendering="crispEdges" points="169.5,688.8 208,683 297.6,665.8 368,649 480,626.6 720,586.5 1047,530"/>
<polygon fill="#1818D8" points="184,685.5 198,683.5 210,683 203,687 194,690.5"/>
<g fill="none" stroke-width="1" shape-rendering="crispEdges">
<polyline stroke="#A81C2C" points="272.5,139.5 290.5,183 328,253.5 330,260 353.5,305 365.5,335 380.5,371 389.5,399.5 385.75,406 377.5,395 355,362 323.5,290 310,260 301,240 275.5,180 262.75,154.5"/>
<polyline stroke="#941A44" points="389.5,140 397.5,172.5 406.5,202.5 420,260 435,327.5 442.5,365 447.75,410 447.75,437.5 445.5,449.5 447.75,497.5 447,508 438,514 420,502 390,470.5 370,437.5 345,400 328,368 299.5,317 272.5,264.5"/>
<polyline stroke="#7A1A54" points="418.5,140 429,187.5 438,222 447,260 457.5,312.5 468,365 472.5,405 476,445 471,490 470,500 468.8,530 464,539.6 453.2,545.6 436.4,539.6 416,522.8 395.6,500 390,494.5 373,470.5 347.5,439 335.5,419.5 319,400 313,392 290.5,366.5 272.5,346"/>
<polyline stroke="#5A1A72" points="439.5,140 450,183 466.5,270 474,305 486,372.5 489.75,410 491,445 488,500 478.4,545.6 467.6,560 456.8,561.2 419.6,537.2 399.2,524 390,520 362.5,497.5 322,460 302.5,442.75 274,432 262,437.5"/>
<polyline stroke="#3A1A7C" points="457.5,150 466.5,183 481.5,270 487.5,297.5 498,372.5 501,410 502.5,437.5 498.8,500 490.4,524 482,560"/>
<polyline stroke="#3A1A7C" points="262,508 292,493 307,493 325,499 362.5,520 380,532.4 400,542.5 430.4,556.4"/>
<polyline stroke="#1E1A7A" points="471,150 478.5,183 493.5,270 501,312.5 508.5,390.5"/>
<polyline stroke="#1E1A7A" points="508.5,496 500,527.6 489.2,561.2"/>
<polyline stroke="#1E1A7A" points="250.8,545.6 310.8,529.4 325.2,529.4 362.5,542.5 380,548 390,552.8 410,560"/>
<polyline stroke="#205A70" points="483,150 489,187.5 504,270 508.5,308"/>
<polyline stroke="#205A70" points="508.4,527.6 495.2,560"/>
<polyline stroke="#206070" points="284.4,561.2 324,552.2 338.4,551.6 379.2,560.6"/>
<polyline stroke="#207060" points="493.5,150 502.5,210 508.5,252"/>
<polyline stroke="#207060" points="508.4,542 500,561.2"/>
<polyline stroke="#309060" points="502.5,151.5 509,195"/>
</g>
<g font-family="Liberation Sans" font-size="10" fill="#111">
<text transform="translate(259,133) rotate(72)">2,75</text>
<text transform="translate(377,132) rotate(80)">2,87</text>
<text transform="translate(405,132) rotate(80)">3,01</text>
<text transform="translate(427,132) rotate(80)">3,15</text>
<text transform="translate(444,132) rotate(80)">3,29</text>
<text transform="translate(457,132) rotate(82)">3,42</text>
<text transform="translate(468,132) rotate(82)">3,56</text>
<text transform="translate(478,132) rotate(82)">3,70</text>
<text transform="translate(487,130) rotate(82)">3,84</text>
<text x="497" y="149">3,97</text>
<text transform="translate(376,415) rotate(22)">2,75</text>
<text transform="translate(431,524) rotate(6)">2,87</text>
<text transform="translate(441,553) rotate(15)">3,01</text>
<text transform="translate(428,559) rotate(22)">3,15</text>
<text transform="translate(425,568) rotate(22)">3,29</text>
<text transform="translate(391,563) rotate(20)">3,42</text>
<text transform="translate(277,573) rotate(-6)">3,56</text>
<text transform="translate(514,573) rotate(-75)">3,84</text>
<text transform="translate(508,575) rotate(-62)">3,97</text>
</g>
<g font-family="Liberation Serif" font-size="10.2" fill="#000">
<text x="562" y="635">Depositi Colluviali</text>
<text x="562" y="647">γ=1800,00 &#160;&#160;γsat=2000,00</text>
<text x="562" y="659">ϕ=18 &#160;c=0,500</text>
<text x="659" y="772">Argilla Azzura</text>
<text x="659" y="784">γ=2000,00 &#160;&#160;γsat=2100,00</text>
<text x="659" y="796">ϕ=23 &#160;c=0,100</text>
</g>
<text x="617" y="167.5" font-family="Liberation Sans" font-size="25" fill="#000" textLength="321" lengthAdjust="spacingAndGlyphs">Curve fattore di sicurezza</text>
</svg>
</body></html>
